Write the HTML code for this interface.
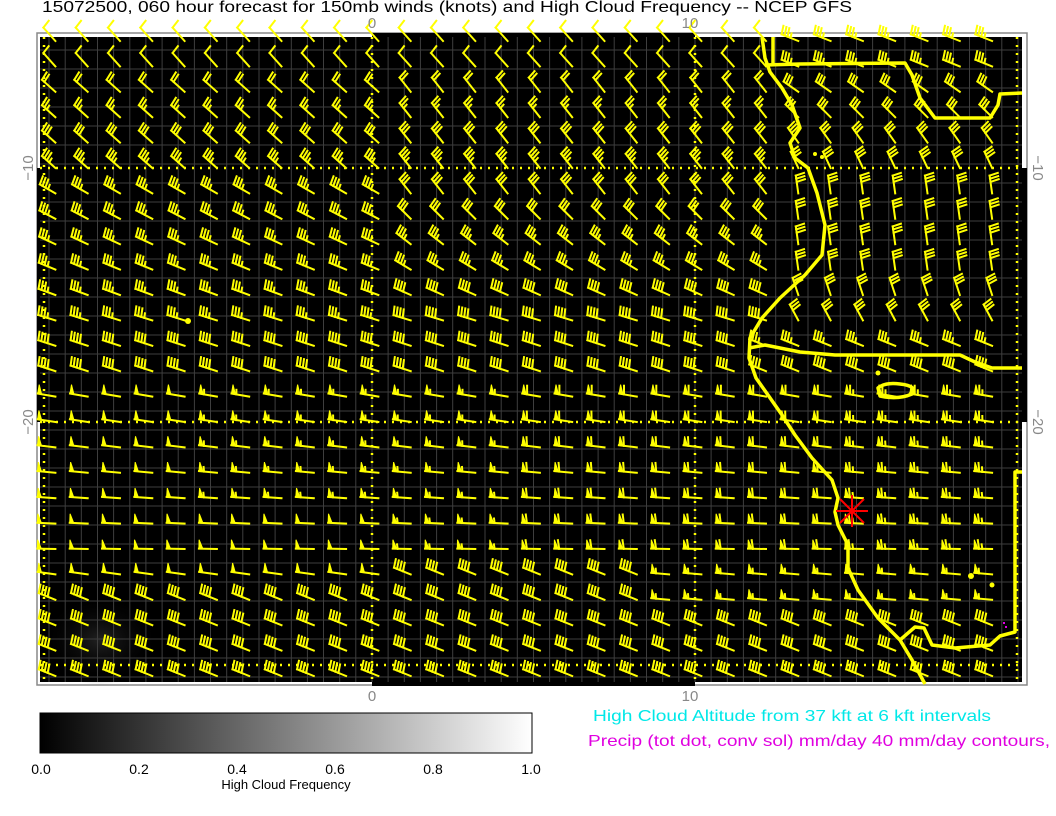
<!DOCTYPE html>
<html><head><meta charset="utf-8"><style>
html,body{margin:0;padding:0;background:#fff;width:1056px;height:816px;overflow:hidden}
svg{display:block}
text{font-family:"Liberation Sans",sans-serif}
</style></head><body>
<svg id="s" width="1056" height="816" viewBox="0 0 1056 816" xmlns="http://www.w3.org/2000/svg">
<defs>
<linearGradient id="cb" x1="0" x2="1" y1="0" y2="0"><stop offset="0" stop-color="#000"/><stop offset="1" stop-color="#fff"/></linearGradient>
<radialGradient id="gh" cx="0.5" cy="0.5" r="0.5"><stop offset="0" stop-color="#222"/><stop offset="1" stop-color="#000" stop-opacity="0"/></radialGradient>
</defs>
<text x="42" y="12" font-size="16" textLength="810" lengthAdjust="spacingAndGlyphs">15072500, 060 hour forecast for 150mb winds (knots) and High Cloud Frequency -- NCEP GFS</text>
<rect x="37" y="33" width="990" height="652" fill="#fff" stroke="#888" stroke-width="1.5"/>
<rect x="40" y="37" width="982" height="645" fill="#000"/>
<ellipse cx="100" cy="640" rx="60" ry="45" fill="url(#gh)"/>
<g id="grid" stroke="#3e3e3e" stroke-width="1"></g>
<rect x="372" y="33" width="323" height="4" fill="#000"/>
<rect x="372" y="682" width="323" height="4" fill="#000"/>
<rect x="37" y="168" width="3" height="254" fill="#000"/>
<rect x="1022" y="168" width="5" height="254" fill="#000"/>
<g stroke="#ffff00" stroke-width="2.5" stroke-dasharray="2,6" fill="none">
<line x1="372" y1="37" x2="372" y2="682"/><line x1="695" y1="37" x2="695" y2="682"/>
<line x1="1017" y1="37" x2="1017" y2="682"/><line x1="44" y1="37" x2="44" y2="682"/>
<line x1="40" y1="168" x2="1022" y2="168"/><line x1="40" y1="422" x2="1022" y2="422"/>
<line x1="40" y1="665" x2="1022" y2="665"/>
</g>
<g id="barbs" stroke="#ffff00" stroke-width="2" fill="#ffff00" stroke-linecap="square"></g>
<g stroke="#ffff00" stroke-width="3.5" fill="none" stroke-linejoin="round">
<polyline points="762,37 765,58 770,72 782,88 792,105 800,128 790,143 795,158 808,168 817,193 825,225 822,255 805,275 780,298 762,318 750,338 749,358 756,378 768,395 782,415 795,435 812,458 832,480 838,498 835,512 838,525 848,545 848,568 858,590 878,618 900,640 912,660 925,684"/>
<polyline points="765,65 800,64 905,63 912,75 920,98 935,118 990,118 998,105 1000,94 1022,93"/>
<polyline points="773,37 773,64"/>
<polyline points="749,348 765,345 800,352 835,355 960,355 975,362 992,368 1022,368"/>
<polyline points="900,640 915,627 924,628 932,645 955,648 990,645 1000,636 1015,632 1015,472 1022,472"/>
<path d="M878 388 Q885 382 900 384 Q918 386 912 394 Q898 400 880 396 Z"/>
</g>
<g fill="#ffff00"><circle cx="188" cy="321" r="3"/><circle cx="878" cy="373" r="2.5"/><circle cx="971" cy="576" r="3"/><circle cx="992" cy="585" r="2.5"/><circle cx="815" cy="154" r="2"/><circle cx="822" cy="157" r="2"/></g>
<g fill="#e000e0"><rect x="1003" y="622" width="2" height="2"/><rect x="1005" y="626" width="2" height="2"/></g>
<g stroke="#ff0000" stroke-width="2">
<line x1="836" y1="511" x2="868" y2="511"/><line x1="852" y1="495" x2="852" y2="527"/>
<line x1="840" y1="499" x2="864" y2="523"/><line x1="840" y1="523" x2="864" y2="499"/>
</g>
<g fill="#888" font-size="15">
<text x="372" y="28" text-anchor="middle">0</text>
<text x="690" y="28" text-anchor="middle">10</text>
<text x="372" y="701" text-anchor="middle">0</text>
<text x="690" y="701" text-anchor="middle">10</text>
<text transform="translate(33,168) rotate(-90)" text-anchor="middle">−10</text>
<text transform="translate(33,422) rotate(-90)" text-anchor="middle">−20</text>
<text transform="translate(1033,168) rotate(90)" text-anchor="middle">−10</text>
<text transform="translate(1033,422) rotate(90)" text-anchor="middle">−20</text>
</g>
<rect x="40" y="713" width="492" height="40" fill="url(#cb)" stroke="#000" stroke-width="1"/>
<g font-size="14" fill="#000" text-anchor="middle">
<text x="41" y="774">0.0</text><text x="139" y="774">0.2</text><text x="237" y="774">0.4</text>
<text x="335" y="774">0.6</text><text x="433" y="774">0.8</text><text x="531" y="774">1.0</text>
<text x="286" y="789" font-size="13">High Cloud Frequency</text>
</g>
<text x="593" y="721" font-size="16" fill="#00e8e8" textLength="398" lengthAdjust="spacingAndGlyphs">High Cloud Altitude from 37 kft at 6 kft intervals</text>
<text x="588" y="746" font-size="16" fill="#e000e0" textLength="462" lengthAdjust="spacingAndGlyphs">Precip (tot dot, conv sol) mm/day 40 mm/day contours,</text>
</svg>
<script>
(function(){
var NS="http://www.w3.org/2000/svg";
var g=document.getElementById('grid');
function ln(p,x1,y1,x2,y2){var l=document.createElementNS(NS,'line');l.setAttribute('x1',x1);l.setAttribute('y1',y1);l.setAttribute('x2',x2);l.setAttribute('y2',y2);p.appendChild(l);}
for(var x=372-16.15*20;x<1022;x+=16.15){if(x>40)ln(g,x.toFixed(1),37,x.toFixed(1),682);}
for(var y=50;y<682;y+=19)ln(g,40,y,1022,y);
var b=document.getElementById('barbs');
function field(i,j,x){
 var a,s;
 if(j<=1){a=48;s=12;if(x>780){a=22;s=35;}}
 else if(j<=5){a=42;s=22+(j-2)*4;if(x>400)a=52;if(x>780){a=35+(j-2)*10;s=30;}}
 else if(j<=11){a=30-(j-6)*2.5;s=36;if(x>400&&x<780){a=52-(j-6)*7;s=30+(j-6)*2;}if(x>=780){a=82-Math.max(0,j-9)*10;s=30;}}
 else if(j<=13){a=18;s=42;if(x>=750){a=22;s=j==12?35:40;}}
 else if(j<=20){a=Math.max(0,10-(j-14)*1.5);s=50+(x-55)/950*15;if(j>=19&&x<400){s=50;}}
 else {a=22;s=40;if(x>650&&j<=22){a=5;s=55;}if(j==21&&x<400){a=8;s=50;}}
 return [a,s];
}
for(var j=0;j<26;j++)for(var i=0;i<30;i++){
 var px=55.4+32.3*i,py=41+25.4*j;
 var f=field(i,j,px),a=f[0]*Math.PI/180,s=Math.round(f[1]/5)*5;
 var dx=-Math.cos(a),dy=-Math.sin(a),nx=-dy,ny=dx,L=18;
 var tx=px+L*dx,ty=py+L*dy;
 ln(b,px.toFixed(1),py.toFixed(1),tx.toFixed(1),ty.toFixed(1));
 var pos=0;
 while(s>=50){var bx=tx-pos*dx,by=ty-pos*dy;
  var p=document.createElementNS(NS,'polygon');
  p.setAttribute('points',bx.toFixed(1)+','+by.toFixed(1)+' '+(bx+9*nx).toFixed(1)+','+(by+9*ny).toFixed(1)+' '+(bx-4*dx).toFixed(1)+','+(by-4*dy).toFixed(1));
  p.setAttribute('stroke-width','1');b.appendChild(p);pos+=5;s-=50;}
 while(s>=10){var bx=tx-pos*dx,by=ty-pos*dy;ln(b,bx.toFixed(1),by.toFixed(1),(bx+8.5*nx+1.5*dx).toFixed(1),(by+8.5*ny+1.5*dy).toFixed(1));pos+=3.2;s-=10;}
 if(s>=5){if(pos==0)pos=3.2;var bx=tx-pos*dx,by=ty-pos*dy;ln(b,bx.toFixed(1),by.toFixed(1),(bx+4.5*nx+0.8*dx).toFixed(1),(by+4.5*ny+0.8*dy).toFixed(1));}
}
})();
</script>
</body></html>
